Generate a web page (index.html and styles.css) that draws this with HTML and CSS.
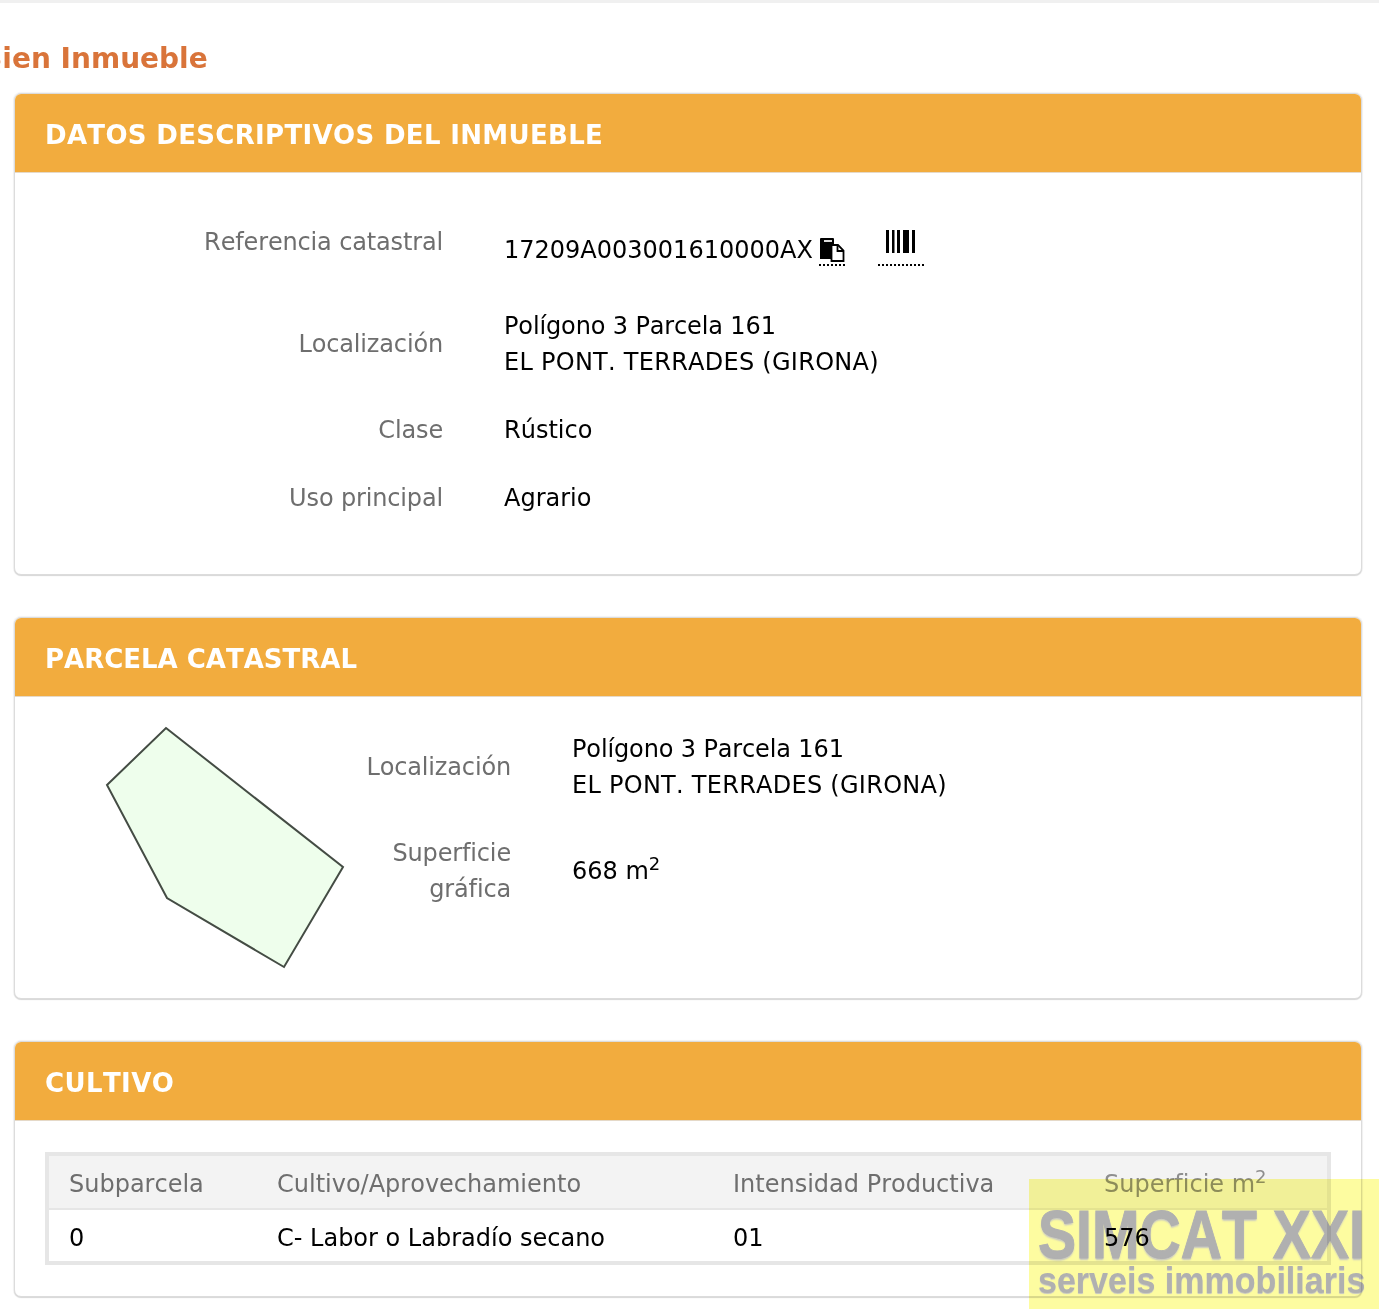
FILE: index.html
```html
<!DOCTYPE html>
<html lang="es">
<head>
<meta charset="utf-8">
<title>Bien Inmueble</title>
<link rel="stylesheet" href="styles.css">
</head>
<body>
<div class="topbar"></div>
<main class="page">
  <h1 class="title">Bien Inmueble</h1>

  <section class="panel panel-datos">
    <h2 class="panel-head head-datos">DATOS DESCRIPTIVOS DEL INMUEBLE</h2>
    <div class="panel-body datos">
      <div class="row row-ref">
        <div class="label">Referencia catastral</div>
        <div class="value ref-value">
          <span>17209A003001610000AX</span>
          <span class="icon-link copy-link">
            <svg class="icon" width="26" height="26" viewBox="0 0 26 26">
              <path d="M1 2a1 1 0 0 1 1-1h12a1 1 0 0 1 1 1v20H1z" fill="#000"/>
              <rect x="5" y="3" width="8" height="2" fill="#ddd"/>
              <path d="M12.500 8h6.500l5.500 5.500v10.500h-12z" fill="#fff" stroke="#000" stroke-width="1.800"/>
              <path d="M18.500 8v6h6" fill="none" stroke="#000" stroke-width="1.800"/>
            </svg>
          </span>
          <span class="icon-link bar-link">
            <svg class="icon" width="30" height="23" viewBox="0 0 30 23">
              <path d="M0 0h3v23H0zM6 0h2.500v23H6zM11 0h3v23h-3zM17 0h6v23h-6zM26 0h3v23h-3z" fill="#000"/>
            </svg>
          </span>
        </div>
      </div>
      <div class="row row-loc">
        <div class="label">Localización</div>
        <div class="value"><span class="line-mixed">Polígono 3 Parcela 161</span><br><span class="line-caps">EL PONT. TERRADES (GIRONA)</span></div>
      </div>
      <div class="row row-single">
        <div class="label">Clase</div>
        <div class="value">Rústico</div>
      </div>
      <div class="row row-single">
        <div class="label">Uso principal</div>
        <div class="value">Agrario</div>
      </div>
    </div>
  </section>

  <section class="panel">
    <h2 class="panel-head">PARCELA CATASTRAL</h2>
    <div class="panel-body parcela">
      <svg class="plot" width="250" height="250" viewBox="0 0 250 250">
        <polygon points="61,2 238,141 179,241 62,172 2,59" fill="#eefeec" stroke="#444c44" stroke-width="2"/>
      </svg>
      <div class="parcela-data">
        <div class="row narrow">
          <div class="label">Localización</div>
          <div class="value"><span class="line-mixed">Polígono 3 Parcela 161</span><br><span class="line-caps">EL PONT. TERRADES (GIRONA)</span></div>
        </div>
        <div class="row narrow">
          <div class="label">Superficie<br>gráfica</div>
          <div class="value">668 m<sup>2</sup></div>
        </div>
      </div>
    </div>
  </section>

  <section class="panel last">
    <h2 class="panel-head head-cultivo">CULTIVO</h2>
    <div class="panel-body cultivo">
      <table class="crop-table">
        <thead>
          <tr><th class="c1">Subparcela</th><th class="c2">Cultivo/Aprovechamiento</th><th class="c3">Intensidad Productiva</th><th class="c4">Superficie m<sup>2</sup></th></tr>
        </thead>
        <tbody>
          <tr><td>0</td><td>C- Labor o Labradío secano</td><td>01</td><td>576</td></tr>
        </tbody>
      </table>
    </div>
  </section>
</main>

<div class="watermark">
  <div class="wm-big">SIMCAT XXI</div>
  <div class="wm-small">serveis immobiliaris</div>
</div>
</body>
</html>
```

FILE: styles.css
```css
html, body {
  margin: 0;
  padding: 0;
  background: #fff;
  font-family: "DejaVu Sans", Verdana, sans-serif;
  font-size: 24px;
  font-kerning: none;
  color: #000;
}
body {
  position: relative;
  height: 1309px;
  overflow: hidden;
}
.topbar {
  height: 3px;
  background: #f0f0f0;
}
.page {
  padding: 0 17px 0 14px;
}
.title {
  margin: 0 0 15px -33px;
  padding-top: 37px;
  font-size: 28px;
  line-height: 38px;
  font-weight: bold;
  color: #d9743a;
}
.panel {
  border: 1px solid #dcdcdc;
  border-radius: 7px;
  margin-bottom: 42px;
  overflow: hidden;
  background: #fff;
  box-shadow: 0 0 1px 1px rgba(0, 0, 0, 0.05), 0 1px 1px rgba(0, 0, 0, 0.12);
}
.panel-head {
  margin: 0;
  height: 79px;
  padding: 4px 30px 0;
  box-sizing: border-box;
  display: flex;
  align-items: center;
  background: #f2ac3e;
  border-bottom: 1px solid #e5d9c8;
  color: #fff;
  font-size: 26px;
  font-weight: bold;
}
.head-datos { letter-spacing: 0.33px; }
.head-cultivo { letter-spacing: 0.4px; }
.panel-body.datos {
  height: 401px;
  box-sizing: border-box;
  padding-top: 51px;
}
.row {
  display: flex;
  align-items: center;
  line-height: 36px;
}
.label {
  flex: none;
  text-align: right;
  color: #6e6e6e;
  padding-right: 61px;
  width: 367px;
  margin-left: 61px;
  letter-spacing: -0.15px;
}
.value {
  color: #000;
}
.line-mixed { letter-spacing: -0.13px; }
.line-caps { letter-spacing: 0.27px; }
.row-ref {
  height: 50px;
  align-items: flex-start;
  margin-bottom: 34px;
}
.ref-value {
  display: flex;
  align-items: flex-start;
  padding-top: 8px;
}
.icon-link {
  display: block;
  border-bottom: 2px dotted #000;
  line-height: 0;
}
.copy-link {
  margin-left: 6px;
  height: 27px;
  margin-top: 5px;
}
.bar-link {
  margin-left: 33px;
  padding: 0 8px;
  height: 34px;
  margin-top: -2px;
}
.row-loc {
  height: 72px;
  margin-bottom: 32px;
}
.row-single {
  height: 36px;
  margin-bottom: 32px;
}
.panel-body.parcela {
  height: 301px;
  box-sizing: border-box;
  display: flex;
  padding: 29px 0 0 90px;
}
.plot {
  flex: none;
}
.parcela-data {
  padding-top: 5px;
}
.narrow {
  height: 72px;
  margin-bottom: 32px;
}
.narrow .label {
  margin-left: 0;
  width: 156px;
  padding-right: 61px;
}
.panel-body.cultivo {
  height: 175px;
  box-sizing: border-box;
  padding: 31px 30px 0;
}
.panel.last {
  margin-bottom: 0;
}
.crop-table {
  width: 100%;
  border-collapse: separate;
  border-spacing: 0;
  border: 4px solid #e6e6e6;
  table-layout: fixed;
}
.crop-table th, .crop-table td {
  text-align: left;
  font-weight: normal;
  line-height: 36px;
  padding: 4px 20px 0;
}
.crop-table th {
  background: #f3f3f3;
  color: #6e6e6e;
  height: 48px;
  border-bottom: 2px solid #e6e6e6;
}
.crop-table td {
  height: 47px;
}
.c1 { width: 168px; }
.c2 { width: 416px; }
.c3 { width: 331px; }
.crop-table .c4 { color: #8e8e8e; }
sup {
  font-size: 18px;
  line-height: 0;
}
.watermark {
  position: absolute;
  left: 1029px;
  top: 1179px;
  width: 350px;
  height: 130px;
  background: #fdfca0;
  mix-blend-mode: multiply;
  font-family: "Liberation Sans", Arial, sans-serif;
  font-weight: bold;
  color: #b0b0b0;
  white-space: nowrap;
  line-height: 1;
  overflow: hidden;
}
.wm-big {
  font-size: 68px;
  margin: 21px 0 0 9px;
  transform: scaleX(0.84);
  transform-origin: left center;
  -webkit-text-stroke: 1px #b0b0b0;
  text-shadow: 0 2px 2px #c4c4c4;
  filter: blur(0.7px);
}
.wm-small {
  font-size: 37px;
  margin: -6px 0 0 9px;
  transform: scaleX(0.92);
  transform-origin: left center;
  text-shadow: 0 1px 1px #c4c4c4;
  filter: blur(0.6px);
}
```
